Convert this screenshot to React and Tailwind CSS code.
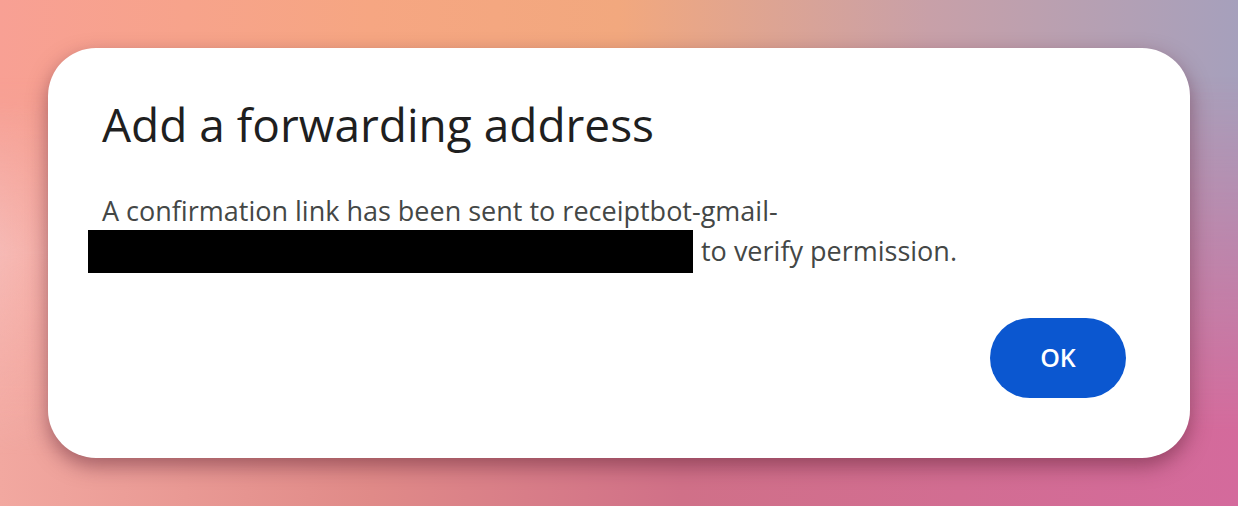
import React from 'react';

export default function App() {
  return (
    <div className="relative h-[506px] w-full overflow-hidden bg-[linear-gradient(90deg,#f8a094_0%,#f6a682_30%,#f2a87e_50%,#c8a0a8_75%,#a6a0bc_100%)] p-12 font-['Open_Sans',sans-serif]">
      {/* bottom row colours, faded in from the top */}
      <div className="pointer-events-none absolute inset-0 bg-[linear-gradient(90deg,#f2a8a0_0%,#e08a88_30%,#d07088_55%,#d46a9c_100%)] [mask-image:linear-gradient(to_bottom,transparent_15%,black_85%)]" />
      <div className="pointer-events-none absolute inset-0 bg-[linear-gradient(90deg,rgba(246,188,184,0.9)_0%,rgba(246,188,184,0)_8%)] [mask-image:linear-gradient(to_bottom,transparent_20%,black_50%,transparent_90%)]" />

      <div className="relative flex h-full flex-col rounded-[48px] bg-white pl-[54px] pr-16 pt-12 pb-[60px] shadow-[0_8px_20px_rgba(90,30,50,0.5)]">
        <h2 className="text-[46px] leading-[56px] text-[#1f1f1f]">
          Add a forwarding address
        </h2>

        <p className="mt-10 text-[27px] leading-[38px] text-[#444746]">
          A confirmation link has been sent to receiptbot-gmail-
          <br />
          <span className="-ml-[14px] mr-[8px] inline-block h-[43px] w-[605px] bg-black align-[-12px]" />
          to verify permission.
        </p>

        <div className="mt-auto flex justify-end">
          <button className="h-[80px] w-[136px] rounded-full bg-[#0b57d0] text-[25px] font-semibold text-white">
            OK
          </button>
        </div>
      </div>
    </div>
  );
}
